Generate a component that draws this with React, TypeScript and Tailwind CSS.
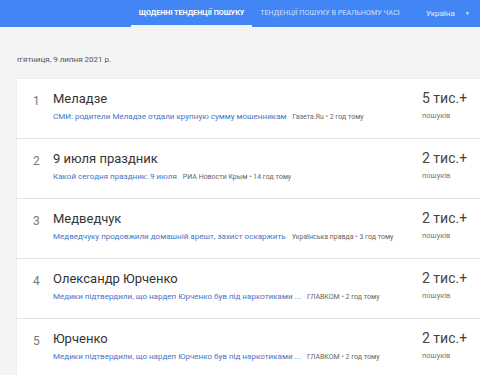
const rows = [
  {
    rank: 1,
    title: "Меладзе",
    link: "СМИ: родители Меладзе отдали крупную сумму мошенникам",
    source: "Газета.Ru • 2 год тому",
    count: "5 тис.+",
  },
  {
    rank: 2,
    title: "9 июля праздник",
    link: "Какой сегодня праздник: 9 июля",
    source: "РИА Новости Крым • 14 год тому",
    count: "2 тис.+",
  },
  {
    rank: 3,
    title: "Медведчук",
    link: "Медведчуку продовжили домашній арешт, захист оскаржить",
    source: "Українська правда • 3 год тому",
    count: "2 тис.+",
  },
  {
    rank: 4,
    title: "Олександр Юрченко",
    link: "Медики підтвердили, що нардеп Юрченко був під наркотиками ...",
    source: "ГЛАВКОМ • 2 год тому",
    count: "2 тис.+",
  },
  {
    rank: 5,
    title: "Юрченко",
    link: "Медики підтвердили, що нардеп Юрченко був під наркотиками ...",
    source: "ГЛАВКОМ • 2 год тому",
    count: "2 тис.+",
  },
]

export default function App() {
  return (
    <div className="h-[375px] w-[480px] overflow-hidden bg-[#f4f4f4] font-['Roboto',sans-serif]">
      <header className="flex h-[27px] items-stretch bg-[#4285f4] pl-[131px] text-[7.2px] uppercase text-white">
        <div className="flex w-[121px] items-center justify-center border-b-2 border-white/90 pt-[2px] font-bold">
          Щоденні тенденції пошуку
        </div>
        <div className="flex w-[156px] items-center justify-center text-white/75">
          Тенденції пошуку в реальному часі
        </div>
        <div className="ml-[18px] flex items-center text-[8px] normal-case text-white/85">
          Україна
          <span className="ml-[10px] text-[5px]">▼</span>
        </div>
      </header>

      <div className="pl-[17px]">
        <div className="flex h-[52px] items-center pt-[14px] text-[8px] text-[#555]">
          п'ятниця, 9 липня 2021 р.
        </div>
        <div className="bg-white shadow-[0_0_1px_rgba(0,0,0,0.15)]">
          {rows.map((r) => (
            <div
              key={r.rank}
              className="flex h-[60px] border-b border-[#e2e2e2] pl-[16px]"
            >
              <div className="w-[20px] pt-[13px] text-[12px] text-[#777]">{r.rank}</div>
              <div className="min-w-0 flex-1 pt-[12px]">
                <div className="text-[13px] leading-[16px] text-[#333]">{r.title}</div>
                <div className="mt-[4px] flex items-baseline whitespace-nowrap">
                  <span className="text-[8.05px] text-[#4774c6]">{r.link}</span>
                  <span className="ml-[6px] text-[7px] text-[#666]">{r.source}</span>
                </div>
              </div>
              <div className="w-[58px] shrink-0 pt-[10px]">
                <div className="text-[14px] leading-[18px] text-[#444]">{r.count}</div>
                <div className="mt-[3px] text-[7.5px] text-[#777]">пошуків</div>
              </div>
            </div>
          ))}
        </div>
      </div>
    </div>
  )
}
